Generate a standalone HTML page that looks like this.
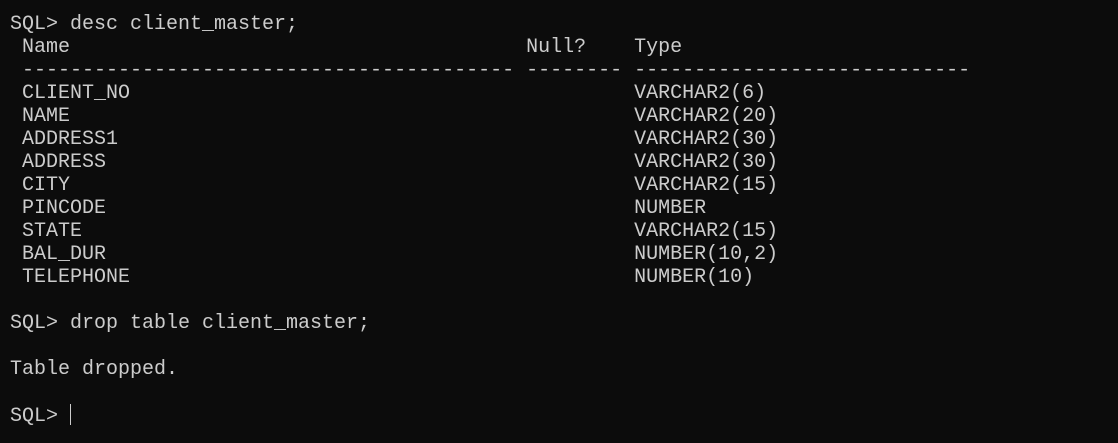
<!DOCTYPE html><html><head><style>
html,body{margin:0;width:1118px;height:443px;background:#0c0c0c;overflow:hidden}
pre{margin:0;padding:13px 0 0 10px;font-family:"Liberation Mono",monospace;font-size:20px;line-height:23px;color:#cccccc}
.c{display:inline-block;width:1px;height:21px;background:#ccc;vertical-align:-4px}
</style></head><body><pre>SQL&gt; desc client_master;
 Name                                      Null?    Type
 ----------------------------------------- -------- ----------------------------
 CLIENT_NO                                          VARCHAR2(6)
 NAME                                               VARCHAR2(20)
 ADDRESS1                                           VARCHAR2(30)
 ADDRESS                                            VARCHAR2(30)
 CITY                                               VARCHAR2(15)
 PINCODE                                            NUMBER
 STATE                                              VARCHAR2(15)
 BAL_DUR                                            NUMBER(10,2)
 TELEPHONE                                          NUMBER(10)

SQL&gt; drop table client_master;

Table dropped.

SQL&gt; <span class="c"></span></pre></body></html>
